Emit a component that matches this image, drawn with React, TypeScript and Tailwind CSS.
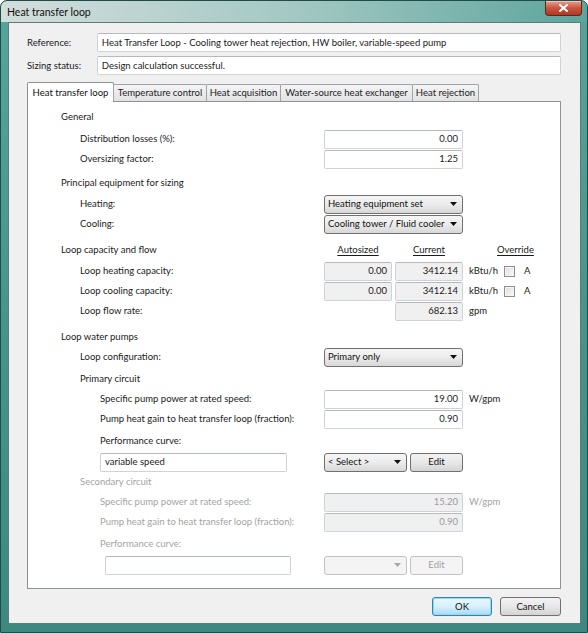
import React from "react";

const font = "font-[Lato,'DejaVu_Sans',sans-serif]";

function Field({
  value,
  w = "w-[139px]",
  disabled = false,
  readOnly = false,
  align = "right",
}: {
  value: string;
  w?: string;
  disabled?: boolean;
  readOnly?: boolean;
  align?: "left" | "right";
}) {
  const bg = disabled || readOnly ? "bg-[#f0f0f0]" : "bg-white";
  const color = disabled ? "text-[#9a9a9a]" : "text-[#1a1a1a]";
  return (
    <div
      className={`${w} h-[19px] ${bg} ${color} border border-[#cfd3d8] border-t-[#b5b9c0] rounded-[2px] flex items-center px-[4px] ${
        align === "right" ? "justify-end" : "justify-start"
      }`}
    >
      {value}
    </div>
  );
}

function Arrow({ disabled = false }: { disabled?: boolean }) {
  return (
    <svg width="7" height="4" viewBox="0 0 7 4" className="shrink-0">
      <path d="M0 0h7L3.5 4z" fill={disabled ? "#a8a8a8" : "#111"} />
    </svg>
  );
}

function Select({
  value,
  w = "w-[139px]",
  disabled = false,
}: {
  value: string;
  w?: string;
  disabled?: boolean;
}) {
  return (
    <div
      className={`${w} h-[19px] rounded-[3px] border flex items-center justify-between pl-[3px] pr-[5px] ${
        disabled
          ? "border-[#c2c2c2] bg-[#f4f4f4] text-[#9a9a9a]"
          : "border-[#707070] bg-gradient-to-b from-[#f6f6f6] via-[#ebebeb] to-[#d8d8d8] text-[#111]"
      }`}
    >
      <span>{value}</span>
      <Arrow disabled={disabled} />
    </div>
  );
}

function Button({
  label,
  w,
  disabled = false,
  primary = false,
}: {
  label: string;
  w: string;
  disabled?: boolean;
  primary?: boolean;
}) {
  let cls =
    "border-[#707070] bg-gradient-to-b from-[#f2f2f2] via-[#e8e8e8] to-[#d3d3d3] text-[#111]";
  if (disabled) cls = "border-[#c2c2c2] bg-[#f4f4f4] text-[#a0a0a0]";
  if (primary)
    cls =
      "border-[#3c7fb1] bg-gradient-to-b from-[#eaf6fd] via-[#d9f0fc] to-[#a7d9f5] text-[#111] shadow-[inset_0_0_0_1px_#7ee1f8]";
  return (
    <div
      className={`${w} h-[19px] rounded-[3px] border flex items-center justify-center ${cls}`}
    >
      {label}
    </div>
  );
}

function Check() {
  return (
    <div className="w-[11px] h-[11px] border border-[#8f8f8f] bg-gradient-to-br from-[#dcdcdc] to-[#fbfbfb] shadow-[inset_0_0_0_1px_#f4f4f4]" />
  );
}

function Row({
  pl,
  label,
  children,
  disabled = false,
  className = "",
}: {
  pl: string;
  label?: React.ReactNode;
  children?: React.ReactNode;
  disabled?: boolean;
  className?: string;
}) {
  return (
    <div className={`flex items-center h-[20px] ${className}`}>
      <div
        className={`w-[296px] shrink-0 ${pl} ${
          disabled ? "text-[#a3a3a3]" : "text-[#1a1a1a]"
        }`}
      >
        {label}
      </div>
      {children}
    </div>
  );
}

function Unit({
  children,
  disabled = false,
}: {
  children: React.ReactNode;
  disabled?: boolean;
}) {
  return (
    <span className={`ml-[6px] ${disabled ? "text-[#a3a3a3]" : "text-[#1a1a1a]"}`}>
      {children}
    </span>
  );
}

const tabs = [
  { label: "Heat transfer loop", w: "w-[87px]" },
  { label: "Temperature control", w: "w-[94px]" },
  { label: "Heat acquisition", w: "w-[75px]" },
  { label: "Water-source heat exchanger", w: "w-[133px]" },
  { label: "Heat rejection", w: "w-[67px]" },
];

export default function App() {
  return (
    <div
      className={`${font} text-[9.5px] leading-none whitespace-nowrap w-[588px] h-[633px] rounded-t-[7px] border border-[#1f4c49] bg-gradient-to-b from-[#58a49b] via-[#48948c] to-[#3d8880] flex flex-col overflow-hidden`}
    >
      {/* title bar */}
      <div className="h-[21px] shrink-0 flex items-start justify-between bg-gradient-to-r from-[#d3dedc] via-[#a4c8c3] to-[#5aa59d] rounded-t-[6px]">
        <div className="pl-[6px] pt-[6px] text-[10.5px] text-[#111]">
          Heat transfer loop
        </div>
        <div className="mr-[5px] w-[37px] h-[15px] rounded-b-[4px] border border-t-0 border-[#6b1f1a] bg-gradient-to-b from-[#e6a091] via-[#c8553f] to-[#b0381f] flex items-center justify-center shadow-[inset_0_1px_0_rgba(255,255,255,0.4)]">
          <svg width="9" height="8" viewBox="0 0 9 8">
            <path
              d="M1 1l7 6M8 1L1 7"
              stroke="#fff"
              strokeWidth="2"
              strokeLinecap="square"
            />
          </svg>
        </div>
      </div>

      {/* client area */}
      <div className="ml-[7px] mr-[6px] h-[602px] shrink-0 bg-[#f0f0f0] border border-[#5b7d7a] flex flex-col pl-[18px] pr-[19px] pt-[10px]">
        <div className="flex items-center h-[19px]">
          <div className="w-[70px] text-[#1a1a1a]">Reference:</div>
          <Field
            value="Heat Transfer Loop - Cooling tower heat rejection, HW boiler, variable-speed pump"
            w="w-[465px]"
            align="left"
          />
        </div>
        <div className="flex items-center h-[19px] mt-[4px]">
          <div className="w-[70px] text-[#1a1a1a]">Sizing status:</div>
          <Field
            value="Design calculation successful."
            w="w-[465px]"
            align="left"
          />
        </div>

        {/* tab strip */}
        <div className="flex items-end h-[20px] mt-[6px] relative z-10">
          {tabs.map((t, i) =>
            i === 0 ? (
              <div
                key={t.label}
                className={`${t.w} h-[20px] -mb-px bg-white border border-b-0 border-[#8e9297] rounded-t-[2px] flex items-center justify-center text-[#111]`}
              >
                {t.label}
              </div>
            ) : (
              <div
                key={t.label}
                className={`${t.w} h-[17px] -ml-px first:ml-0 bg-gradient-to-b from-[#f4f4f4] to-[#e2e2e2] border border-b-0 border-[#a0a4aa] rounded-t-[2px] flex items-center justify-center text-[#222]`}
              >
                {t.label}
              </div>
            )
          )}
        </div>

        {/* tab page */}
        <div className="w-[534px] h-[488px] bg-white border border-[#8e9297] flex flex-col pt-[5px]">
          <Row pl="pl-[33px]" label="General" />
          <Row pl="pl-[52px]" label="Distribution losses (%):" className="mt-[2px]">
            <Field value="0.00" />
          </Row>
          <Row pl="pl-[52px]" label="Oversizing factor:">
            <Field value="1.25" />
          </Row>

          <Row pl="pl-[33px]" label="Principal equipment for sizing" className="mt-[4px]" />
          <Row pl="pl-[52px]" label="Heating:" className="mt-[1px]">
            <Select value="Heating equipment set" />
          </Row>
          <Row pl="pl-[52px]" label="Cooling:">
            <Select value="Cooling tower / Fluid cooler" />
          </Row>

          <Row pl="pl-[33px]" label="Loop capacity and flow" className="mt-[6px]">
            <div className="w-[68px] text-center underline underline-offset-2 text-[#1a1a1a]">
              Autosized
            </div>
            <div className="w-[68px] ml-[3px] text-center underline underline-offset-2 text-[#1a1a1a]">
              Current
            </div>
            <div className="ml-[34px] underline underline-offset-2 text-[#1a1a1a]">
              Override
            </div>
          </Row>
          <Row pl="pl-[52px]" label="Loop heating capacity:" className="mt-[1px]">
            <Field value="0.00" w="w-[68px]" readOnly />
            <div className="ml-[3px]">
              <Field value="3412.14" w="w-[68px]" readOnly />
            </div>
            <div className="w-[41px]">
              <Unit>kBtu/h</Unit>
            </div>
            <Check />
            <span className="ml-[9px] text-[#1a1a1a]">A</span>
          </Row>
          <Row pl="pl-[52px]" label="Loop cooling capacity:">
            <Field value="0.00" w="w-[68px]" readOnly />
            <div className="ml-[3px]">
              <Field value="3412.14" w="w-[68px]" readOnly />
            </div>
            <div className="w-[41px]">
              <Unit>kBtu/h</Unit>
            </div>
            <Check />
            <span className="ml-[9px] text-[#1a1a1a]">A</span>
          </Row>
          <Row pl="pl-[52px]" label="Loop flow rate:">
            <div className="ml-[71px]">
              <Field value="682.13" w="w-[68px]" readOnly />
            </div>
            <Unit>gpm</Unit>
          </Row>

          <Row pl="pl-[33px]" label="Loop water pumps" className="mt-[6px]" />
          <Row pl="pl-[52px]" label="Loop configuration:">
            <Select value="Primary only" />
          </Row>
          <Row pl="pl-[52px]" label="Primary circuit" className="mt-[2px]" />
          <Row pl="pl-[72px]" label="Specific pump power at rated speed:">
            <Field value="19.00" />
            <Unit>W/gpm</Unit>
          </Row>
          <Row pl="pl-[72px]" label="Pump heat gain to heat transfer loop (fraction):">
            <Field value="0.90" />
          </Row>
          <Row pl="pl-[72px]" label="Performance curve:" className="mt-[2px]" />
          <Row
            pl="pl-[72px]"
            className="mt-[1px]"
            label={<Field value="variable speed" w="w-[187px]" align="left" />}
          >
            <Select value="< Select >" w="w-[83px]" />
            <div className="ml-[3px]">
              <Button label="Edit" w="w-[53px]" />
            </div>
          </Row>

          <Row pl="pl-[52px]" label="Secondary circuit" disabled />
          <Row pl="pl-[72px]" label="Specific pump power at rated speed:" disabled>
            <Field value="15.20" disabled />
            <Unit disabled>W/gpm</Unit>
          </Row>
          <Row
            pl="pl-[72px]"
            label="Pump heat gain to heat transfer loop (fraction):"
            disabled
          >
            <Field value="0.90" disabled />
          </Row>
          <Row pl="pl-[72px]" label="Performance curve:" disabled className="mt-[2px]" />
          <Row
            pl="pl-[77px]"
            className="mt-[1px]"
            label={<Field value="" w="w-[186px]" align="left" />}
          >
            <Select value="" w="w-[83px]" disabled />
            <div className="ml-[3px]">
              <Button label="Edit" w="w-[53px]" disabled />
            </div>
          </Row>
        </div>

        {/* dialog buttons */}
        <div className="flex justify-end gap-[8px] mt-[8px]">
          <Button label="OK" w="w-[60px]" primary />
          <Button label="Cancel" w="w-[61px]" />
        </div>
      </div>
    </div>
  );
}
